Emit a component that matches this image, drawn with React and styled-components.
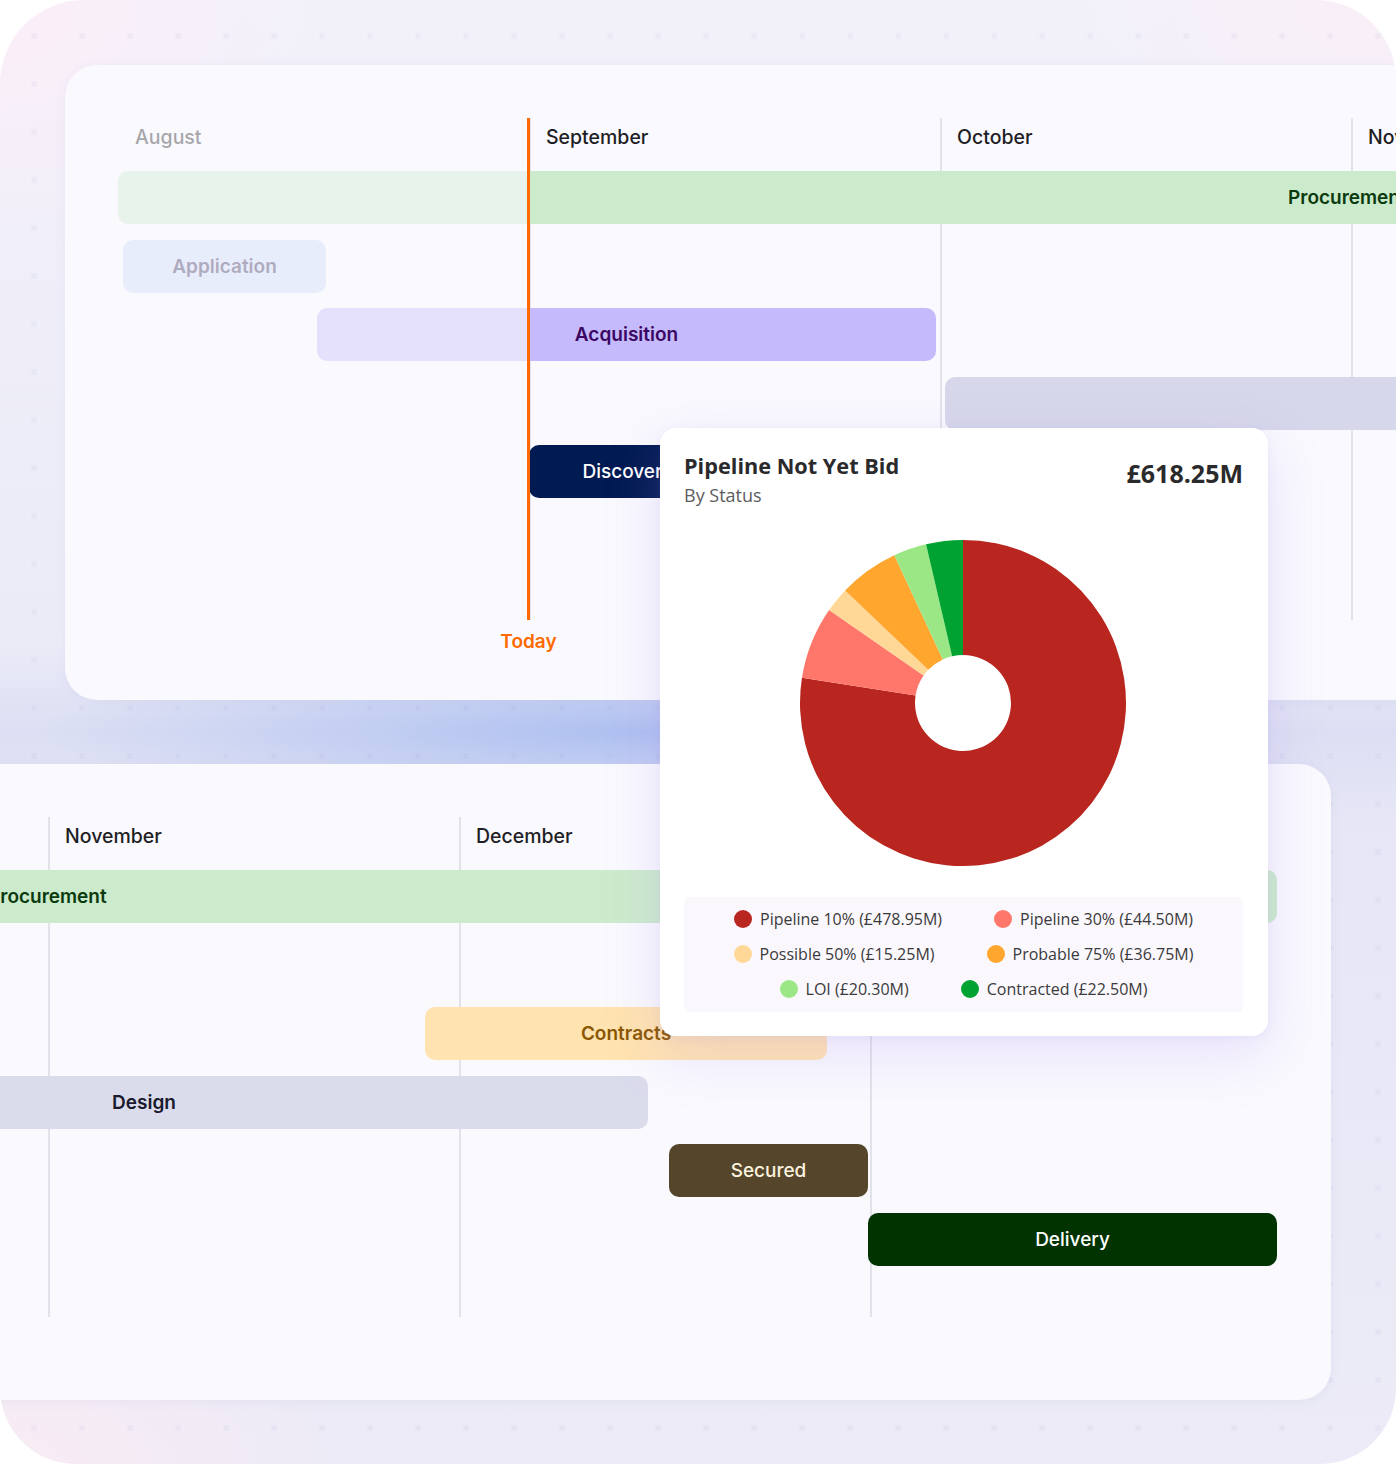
import React from 'react';
import styled, { createGlobalStyle } from 'styled-components';

const MONTH = 411;

const GlobalStyle = createGlobalStyle`
  html, body { margin: 0; padding: 0; background: #ffffff; }
  body { font-family: Inter, "Noto Sans", sans-serif; }
  #root { width: 1396px; height: 1464px; }
`;

const Frame = styled.div`
  position: relative;
  width: 1396px;
  height: 1464px;
  box-sizing: border-box;
  overflow: hidden;
  border-radius: 84px 80px 76px 76px;
  display: flex;
  flex-direction: column;
  gap: 64px;
  padding-top: 65px;
  background:
    radial-gradient(circle, rgba(140, 140, 200, 0.07) 2.5px, transparent 3.5px) 10px 12px / 48px 48px,
    radial-gradient(ellipse 600px 80px at 640px 732px, rgba(168, 188, 240, 0.9), rgba(168, 188, 240, 0) 100%),
    radial-gradient(ellipse 320px 260px at 0 0, rgba(252, 238, 248, 0.95), rgba(252, 238, 248, 0)),
    radial-gradient(ellipse 320px 200px at 1396px 0, rgba(252, 238, 246, 0.8), rgba(252, 238, 246, 0)),
    radial-gradient(ellipse 360px 200px at 0 1464px, rgba(250, 236, 244, 0.95), rgba(250, 236, 244, 0)),
    linear-gradient(180deg, #f2f1fa 0%, #ebebf8 44%, #dcdff3 50%, #e6e6f6 56%, #ecebf7 100%);
`;

const Card = styled.div`
  flex: none;
  position: relative;
  box-sizing: border-box;
  width: ${(p) => p.$w}px;
  height: ${(p) => p.$h}px;
  margin-left: ${(p) => p.$x}px;
  padding: 53px 0 0 ${(p) => p.$pad}px;
  background: #f9f9fe;
  border-radius: 32px;
  overflow: hidden;
  box-shadow: 0 2px 12px rgba(120, 120, 190, 0.07);
`;

const Timeline = styled.div`
  position: relative;
  height: ${(p) => p.$h}px;
`;

const Columns = styled.div`
  display: flex;
  height: 100%;
`;

const MonthCol = styled.div`
  flex: 0 0 ${MONTH}px;
  box-sizing: border-box;
  border-left: 2px solid ${(p) => (p.$ruled ? '#e2e2ea' : 'transparent')};
  padding: 7px 0 0 15px;
  font: 500 19.5px/24px Inter, "Noto Sans", sans-serif;
  color: #1e1e24;
  white-space: nowrap;
`;

const Lanes = styled.div`
  position: absolute;
  top: 53px;
  left: 0;
  display: flex;
  flex-direction: column;
  gap: 15.6px;
`;

const Lane = styled.div`
  height: 53px;
  display: flex;
`;

const Bar = styled.div`
  flex: none;
  height: 53px;
  box-sizing: border-box;
  border-radius: 10px;
  display: flex;
  align-items: center;
  justify-content: ${(p) => (p.$left ? 'flex-start' : 'center')};
  background: ${(p) => p.$bg};
  color: ${(p) => p.$fg};
  font: ${(p) => (p.$dark ? 500 : 600)} 19px/1 Inter, "Noto Sans", sans-serif;
  white-space: nowrap;
`;

const PastShade = styled.div`
  position: absolute;
  left: 0;
  top: 0;
  width: 409px;
  height: 100%;
  background: rgba(249, 249, 254, 0.62);
  z-index: 1;
`;

const TodayLine = styled.div`
  position: absolute;
  left: 409px;
  top: 0;
  width: 3px;
  height: 100%;
  background: #ff6a00;
  z-index: 2;
`;

const TodayLabel = styled.span`
  position: absolute;
  top: calc(100% + 11px);
  left: 50%;
  transform: translateX(-50%);
  font: 600 19px/22px Inter, "Noto Sans", sans-serif;
  color: #ff6a00;
  white-space: nowrap;
`;

const Popup = styled.section`
  position: absolute;
  left: 660px;
  top: 428px;
  width: 608px;
  height: 608px;
  box-sizing: border-box;
  padding: 24px 25px 24px 24px;
  background: #ffffff;
  border-radius: 16px;
  box-shadow: 0 18px 56px rgba(176, 140, 240, 0.22), 0 2px 10px rgba(120, 100, 200, 0.08);
  display: flex;
  flex-direction: column;
  font-family: "Open Sans", "Noto Sans", sans-serif;
  z-index: 5;
`;

const PopHead = styled.header`
  display: flex;
  justify-content: space-between;
  align-items: flex-start;
`;

const TitleBlock = styled.div`
  display: flex;
  flex-direction: column;
`;

const Title = styled.h2`
  margin: 0;
  font: 700 21.7px/28px "Open Sans", "Noto Sans", sans-serif;
  color: #2a2a2c;
`;

const Subtitle = styled.div`
  font: 400 18px/24px "Open Sans", "Noto Sans", sans-serif;
  color: #5c5c60;
  margin-top: 3px;
`;

const Amount = styled.div`
  font: 700 25px/36px "Open Sans", "Noto Sans", sans-serif;
  color: #2a2a2c;
  padding-top: 3px;
`;

const ChartWrap = styled.div`
  display: flex;
  justify-content: center;
  margin-top: 31px;
  height: 330px;
  padding-right: 2px;
`;

const Legend = styled.div`
  margin-top: 29px;
  padding: 10px 0 11px;
  background: #faf8fc;
  border-radius: 6px;
  display: flex;
  flex-direction: column;
  gap: 11px;
`;

const LegendRow = styled.div`
  display: flex;
  justify-content: center;
  gap: 52px;
`;

const LegendItem = styled.div`
  display: flex;
  align-items: center;
  gap: 8px;
  font: 400 16px/24px "Open Sans", "Noto Sans", sans-serif;
  color: #3a3a3c;
  white-space: nowrap;
`;

const Dot = styled.span`
  width: 18px;
  height: 18px;
  border-radius: 50%;
  background: ${(p) => p.$c};
  flex: none;
`;

const topMonths = ['August', 'September', 'October', 'November'];
const bottomMonths = ['November', 'December', 'January'];

const topBars = [
  { label: 'Procurement', start: 0, width: 1700, bg: '#ccebcc', fg: '#0b3a0e', labelAt: 1170 },
  { label: 'Application', start: 5, width: 203, bg: '#ccd9f9', fg: '#392e5b' },
  { label: 'Acquisition', start: 199, width: 619, bg: '#c5bafb', fg: '#3b0764' },
  { label: '', start: 827, width: 1200, bg: '#d6d7ea', fg: '#1a1a2e' },
  { label: 'Discovery', start: 411, width: 198, bg: '#001a52', fg: '#ffffff', dark: true },
];

const bottomBars = [
  { label: 'Procurement', start: -500, width: 1729, bg: '#ccebcc', fg: '#0b3a0e', labelAt: 440 },
  null,
  { label: 'Contracts', start: 377, width: 402, bg: '#ffe3b0', fg: '#8a5700' },
  { label: 'Design', start: -408, width: 1008, bg: '#dadbeb', fg: '#1a1a2e' },
  { label: 'Secured', start: 621, width: 199, bg: '#54452b', fg: '#fbf2de', dark: true },
  { label: 'Delivery', start: 820, width: 409, bg: '#003300', fg: '#ffffff', dark: true },
];

const slices = [
  { label: 'Pipeline 10%', value: 478.95, color: '#b9261f' },
  { label: 'Pipeline 30%', value: 44.5, color: '#ff776b' },
  { label: 'Possible 50%', value: 15.25, color: '#ffd897' },
  { label: 'Probable 75%', value: 36.75, color: '#ffa62f' },
  { label: 'LOI', value: 20.3, color: '#9be786' },
  { label: 'Contracted', value: 22.5, color: '#00a331' },
];

function arcPath(cx, cy, r0, r1, a0, a1) {
  const pt = (r, a) => [cx + r * Math.sin(a), cy - r * Math.cos(a)];
  const large = a1 - a0 > Math.PI ? 1 : 0;
  const [x0, y0] = pt(r1, a0);
  const [x1, y1] = pt(r1, a1);
  const [x2, y2] = pt(r0, a1);
  const [x3, y3] = pt(r0, a0);
  return `M${x0} ${y0} A${r1} ${r1} 0 ${large} 1 ${x1} ${y1} L${x2} ${y2} A${r0} ${r0} 0 ${large} 0 ${x3} ${y3} Z`;
}

function Donut() {
  const total = slices.reduce((s, d) => s + d.value, 0);
  let acc = 0;
  return (
    <svg width="330" height="330" viewBox="0 0 330 330">
      {slices.map((d) => {
        const a0 = (acc / total) * Math.PI * 2;
        acc += d.value;
        const a1 = (acc / total) * Math.PI * 2;
        return <path key={d.label} d={arcPath(165, 165, 48, 163, a0, a1)} fill={d.color} />;
      })}
    </svg>
  );
}

function GanttBar({ bar }) {
  if (!bar) return <Lane />;
  return (
    <Lane>
      <Bar
        $bg={bar.bg}
        $fg={bar.fg}
        $dark={bar.dark}
        $left={bar.labelAt != null}
        style={{
          marginLeft: bar.start,
          width: bar.width,
          paddingLeft: bar.labelAt != null ? bar.labelAt : undefined,
        }}
      >
        {bar.label}
      </Bar>
    </Lane>
  );
}

function Gantt({ months, bars, height, firstRuled, today }) {
  return (
    <Timeline $h={height}>
      <Columns>
        {months.map((m, i) => (
          <MonthCol key={m} $ruled={i > 0 || firstRuled}>
            {m}
          </MonthCol>
        ))}
      </Columns>
      <Lanes>
        {bars.map((b, i) => (
          <GanttBar key={i} bar={b} />
        ))}
      </Lanes>
      {today && (
        <>
          <PastShade />
          <TodayLine>
            <TodayLabel>Today</TodayLabel>
          </TodayLine>
        </>
      )}
    </Timeline>
  );
}

const fmt = (v) => `£${v.toFixed(2)}M`;

export default function App() {
  const rows = [slices.slice(0, 2), slices.slice(2, 4), slices.slice(4, 6)];
  return (
    <>
      <GlobalStyle />
      <Frame>
        <Card $x={65} $w={1420} $h={635} $pad={53}>
          <Gantt months={topMonths} bars={topBars} height={502} today />
        </Card>
        <Card $x={-40} $w={1371} $h={636} $pad={88}>
          <Gantt months={bottomMonths} bars={bottomBars} height={500} firstRuled />
        </Card>
        <Popup>
          <PopHead>
            <TitleBlock>
              <Title>Pipeline Not Yet Bid</Title>
              <Subtitle>By Status</Subtitle>
            </TitleBlock>
            <Amount>£618.25M</Amount>
          </PopHead>
          <ChartWrap>
            <Donut />
          </ChartWrap>
          <Legend>
            {rows.map((r, i) => (
              <LegendRow key={i}>
                {r.map((d) => (
                  <LegendItem key={d.label}>
                    <Dot $c={d.color} />
                    {`${d.label} (${fmt(d.value)})`}
                  </LegendItem>
                ))}
              </LegendRow>
            ))}
          </Legend>
        </Popup>
      </Frame>
    </>
  );
}
